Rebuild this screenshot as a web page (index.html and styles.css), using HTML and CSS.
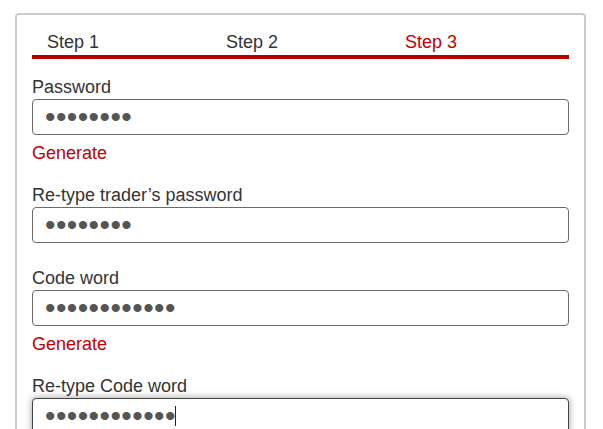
FILE: index.html
```html
<!DOCTYPE html>
<html lang="en">
<head>
<meta charset="utf-8">
<title>Registration – Step 3</title>
<link rel="stylesheet" href="styles.css">
</head>
<body>
<div class="card">
  <ol class="steps">
    <li class="step">Step 1</li>
    <li class="step">Step 2</li>
    <li class="step step-active">Step 3</li>
  </ol>
  <form class="form">
    <div class="field field-gen">
      <label class="label" for="pw">Password</label>
      <input class="input" id="pw" type="password" value="abcdefgh">
      <a class="generate" href="#">Generate</a>
    </div>
    <div class="field">
      <label class="label" for="pw2">Re-type trader’s password</label>
      <input class="input" id="pw2" type="password" value="abcdefgh">
    </div>
    <div class="field field-gen">
      <label class="label" for="cw">Code word</label>
      <input class="input" id="cw" type="password" value="abcdefghijkl">
      <a class="generate" href="#">Generate</a>
    </div>
    <div class="field">
      <label class="label" for="cw2">Re-type Code word</label>
      <div class="input-wrap">
        <input class="input input-focus" id="cw2" type="password" value="abcdefghijkl">
        <span class="caret"></span>
      </div>
    </div>
  </form>
</div>
</body>
</html>
```
FILE: styles.css
```css
* { box-sizing: border-box; }
html, body { height: 100%; }
body {
  margin: 0;
  padding: 13px 17px 0 15px;
  background: #fff;
  font-family: "Liberation Sans", Arial, sans-serif;
  font-size: 18px;
  line-height: 20px;
  color: #333;
  overflow: hidden;
}
.card {
  border: 2px solid #cccccc;
  border-radius: 4px;
  padding: 15px 15px 40px;
  min-height: 500px;
}
.steps {
  list-style: none;
  margin: 0;
  padding: 2px 0 3px;
  display: grid;
  grid-template-columns: 1fr 1fr 1fr;
  border-bottom: 4px solid #bb0000;
}
.step {
  padding-left: 15px;
  color: #333;
}
.step-active { color: #c00000; }
.form {
  display: flex;
  flex-direction: column;
  padding-top: 18px;
}
.field {
  display: flex;
  flex-direction: column;
  align-items: flex-start;
  margin-bottom: 25px;
}
.field-gen { margin-bottom: 22px; }
.label {
  display: block;
  margin-bottom: 2px;
}
.input-wrap {
  position: relative;
  width: 100%;
}
.input {
  display: block;
  width: 100%;
  height: 36px;
  border: 1px solid #6b6b6b;
  border-radius: 4px;
  padding: 0 12px;
  font-family: "Liberation Sans", Arial, sans-serif;
  font-size: 30px;
  line-height: 34px;
  letter-spacing: 0.4px;
  color: #555;
  background: #fff;
  outline: none;
}
.input-focus {
  border-color: #444;
  box-shadow: 0 0 7px rgba(0, 0, 0, 0.4);
}
.caret {
  position: absolute;
  left: 143px;
  top: 8px;
  width: 1px;
  height: 20px;
  background: #222;
}
.generate {
  margin-top: 8px;
  color: #c00000;
  text-decoration: none;
}
```
